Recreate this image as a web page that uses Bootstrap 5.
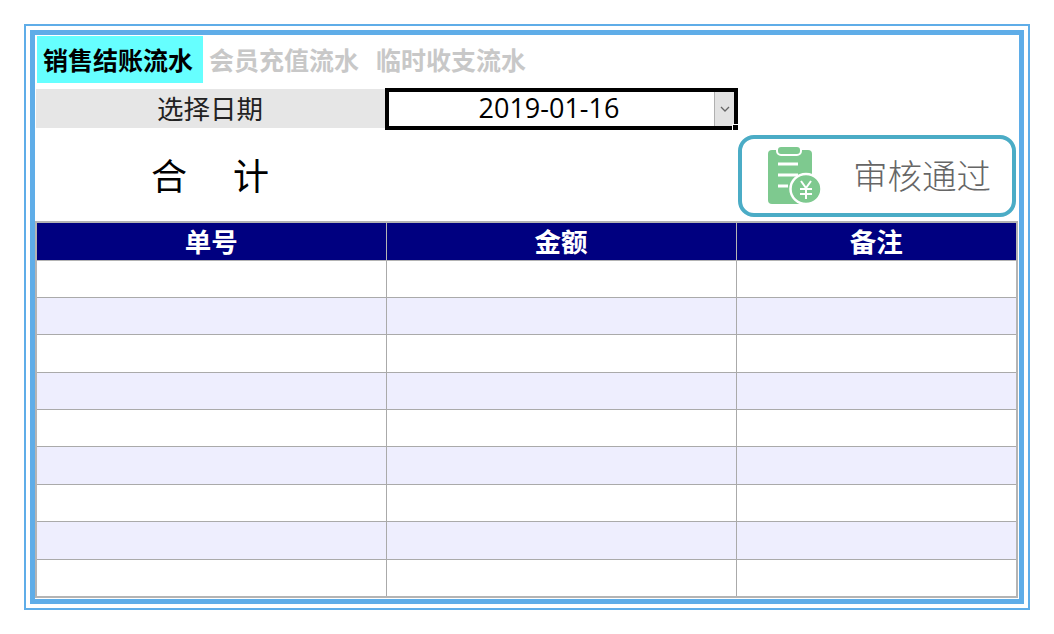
<!doctype html>
<html lang="zh"><head><meta charset="utf-8">
<link rel="stylesheet" href="https://cdn.jsdelivr.net/npm/bootstrap@5.3.0/dist/css/bootstrap.min.css">
<style>
html,body{height:100%;background:#fff}
body{font-family:"Noto Sans CJK SC","Liberation Sans",sans-serif;color:#000;padding:24px}
.outer-frame{width:1006px;height:586px;border:2px solid #5fade8;padding:4px}
.inner-frame{height:100%;border:5px solid #5fade8;background:#fff;padding:1px 0 0 1px}
.tabs-line{height:47px;margin-left:1px;margin-bottom:6px}
.sheet-tab{font-size:25px;font-weight:700;color:#c8c8c8;line-height:46px;white-space:nowrap}
.sheet-tab.on{width:166px;background:#66ffff;color:#000;text-align:center;padding-right:4px}
.sheet-tab.t2{margin-left:6px}.sheet-tab.t3{margin-left:17px}
.date-line{height:40px}
.date-label{width:349px;height:39px;background:#e6e6e6;font-size:26.5px;line-height:37px;text-align:center;color:#222;padding-right:1px}
.date-box{width:353px;height:42px;margin-top:-1px;border:4px solid #000;position:relative;font-family:"Open Sans","Noto Sans",sans-serif;font-size:27px;line-height:32px;text-align:center;padding-right:25px;color:#000}
.date-arrow{position:absolute;right:0;top:0;width:20px;height:34px;background:#e2e2e2;border-left:1px solid #b0b0b0}
.date-handle{position:absolute;right:-5px;bottom:-5px;width:7px;height:7px;background:#000;border:1px solid #fff}
.total-line{height:93px;margin-bottom:-1px}
.total-text{width:349px;padding-left:115px;padding-top:19px;font-size:36px;line-height:52px;gap:46px}
.audit-btn{width:278px;height:82px;margin-left:353px;margin-top:6px;border:4px solid #4bacc6;border-radius:16px;background:#fff;color:#666;font-size:34.5px;font-weight:300;padding-left:26px;padding-bottom:2px;flex:none}
.audit-btn span{margin-left:31px}
.audit-btn svg{flex:none}
.flow-table{width:983px;margin:0 0 0 -1px;border-collapse:collapse;table-layout:fixed;border:2px solid #b4b4b4}
.flow-table th{background:#000080;color:#fff;font-size:26.5px;font-weight:700;height:38px;line-height:34px;padding:0;text-align:center;border:1px solid #b4b4b4}
.flow-table td{height:37.4px;padding:0;border:1px solid #aaa;background:#fff}
.flow-table tr.alt td{background:#eeeefe}
</style></head>
<body>
<div class="outer-frame"><div class="inner-frame">
 <div class="tabs-line d-flex">
  <div class="sheet-tab on">销售结账流水</div>
  <div class="sheet-tab t2">会员充值流水</div>
  <div class="sheet-tab t3">临时收支流水</div>
 </div>
 <div class="date-line d-flex">
  <div class="date-label">选择日期</div>
  <div class="date-box">2019-01-16
   <div class="date-arrow d-flex align-items-center justify-content-center"><svg width="10" height="6" viewBox="0 0 10 6"><path d="M1 1l4 4 4-4" fill="none" stroke="#666" stroke-width="1.3"/></svg></div>
   <div class="date-handle"></div>
  </div>
 </div>
 <div class="total-line d-flex">
  <div class="total-text d-flex"><span>合</span><span>计</span></div>
  <div class="audit-btn d-flex align-items-center">
   <svg width="54" height="58" viewBox="0 0 54 58">
    <rect x="0" y="4" width="44" height="54" rx="4" fill="#7ec98f"/>
    <rect x="9" y="0" width="24" height="9" rx="4" fill="#7ec98f" stroke="#fff" stroke-width="2"/>
    <path d="M10 18h20M10 29h20M10 40h10" stroke="#fff" stroke-width="3" fill="none"/>
    <ellipse cx="38" cy="43" rx="15.5" ry="15" fill="#7ec98f" stroke="#fff" stroke-width="2.5"/>
    <path d="M33 35l5 7 5-7M38 42v11M32 43h12M32 48h12" stroke="#fff" stroke-width="2" fill="none"/>
   </svg>
   <span>审核通过</span>
  </div>
 </div>
 <table class="flow-table">
  <colgroup><col style="width:350px"><col style="width:350px"><col></colgroup>
  <thead><tr><th>单号</th><th>金额</th><th>备注</th></tr></thead>
  <tbody>
   <tr><td></td><td></td><td></td></tr>
   <tr class="alt"><td></td><td></td><td></td></tr>
   <tr><td></td><td></td><td></td></tr>
   <tr class="alt"><td></td><td></td><td></td></tr>
   <tr><td></td><td></td><td></td></tr>
   <tr class="alt"><td></td><td></td><td></td></tr>
   <tr><td></td><td></td><td></td></tr>
   <tr class="alt"><td></td><td></td><td></td></tr>
   <tr><td></td><td></td><td></td></tr>
  </tbody>
 </table>
</div></div>
</body></html>
